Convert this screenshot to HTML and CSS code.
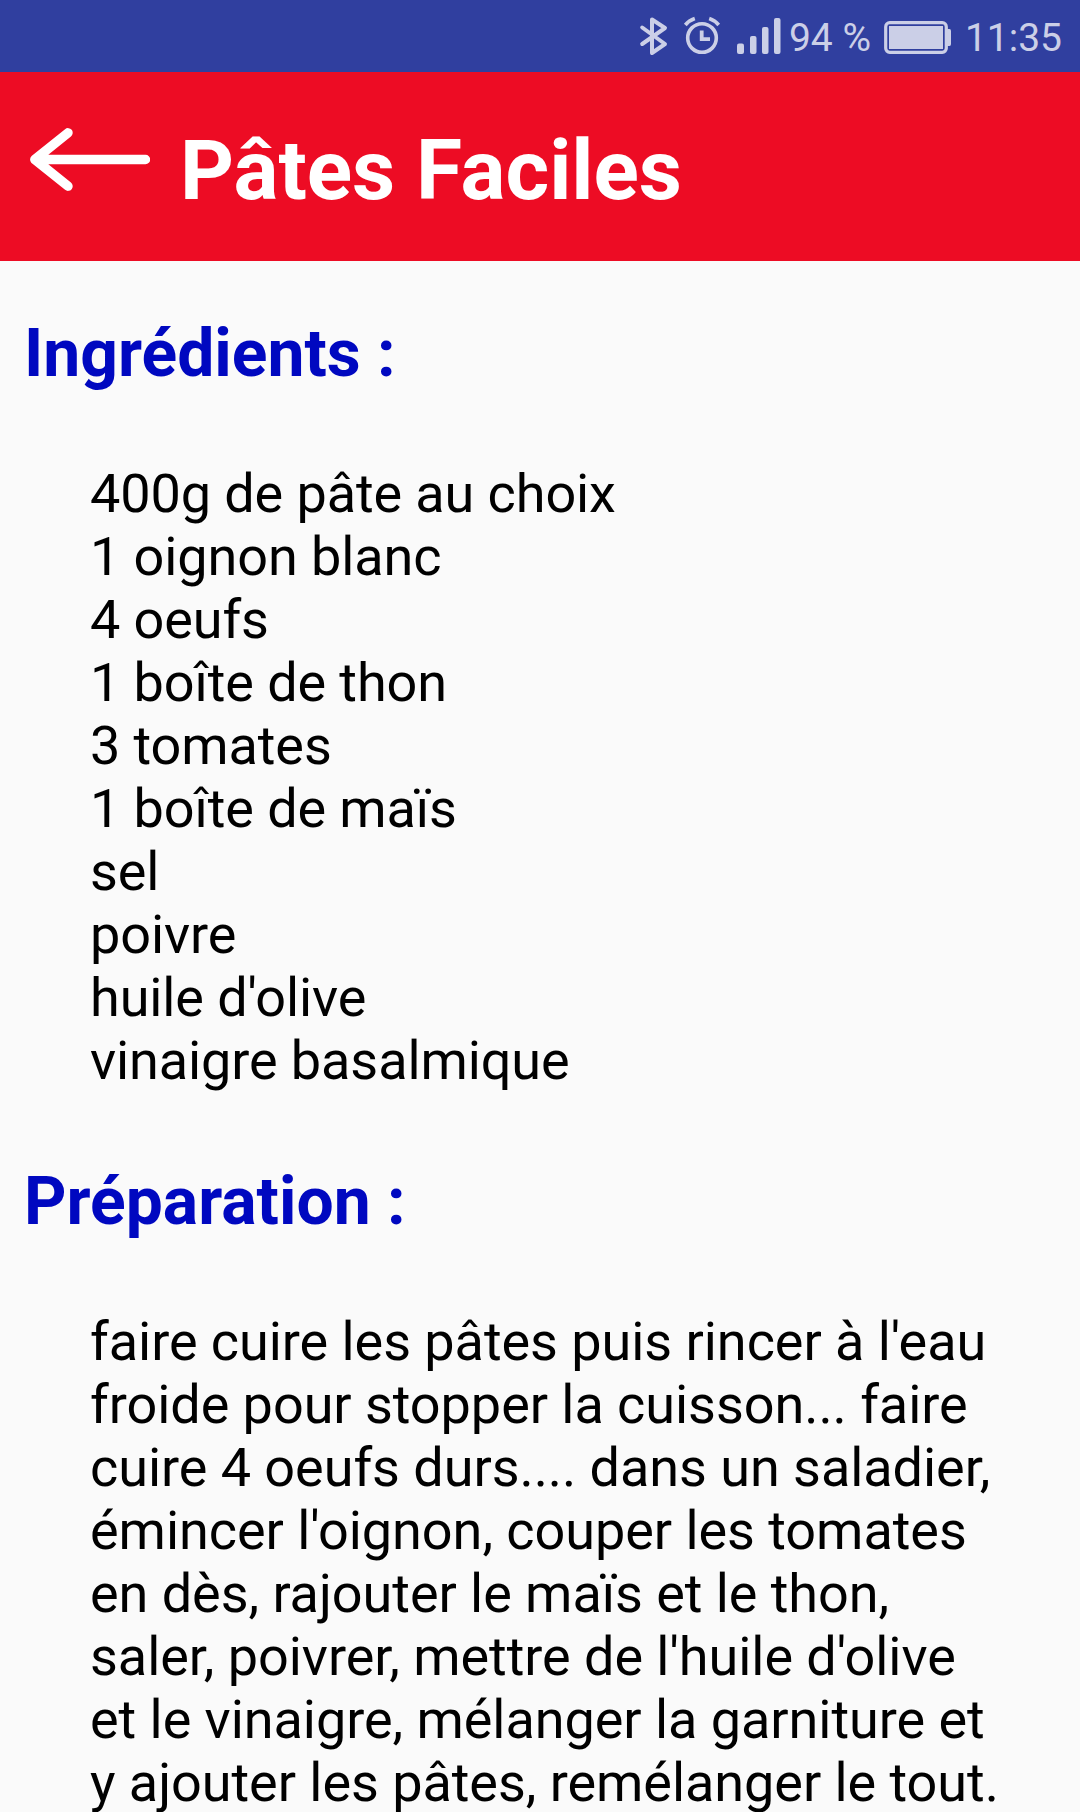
FILE: index.html
```html
<!DOCTYPE html>
<html lang="fr">
<head>
    <meta charset="UTF-8">
    <title>Pâtes Faciles</title>
    <link rel="stylesheet" href="styles.css">
</head>
<body>
    <div class="status-bar">
        <svg class="icon-bluetooth" width="30" height="40" viewBox="0 0 30 40" fill="none">
            <path d="M3.2 11.5L26 28L13 37V3.5L26 12L3.2 28" stroke="currentColor" stroke-width="4" stroke-linecap="round" stroke-linejoin="round"/>
        </svg>
        <svg class="icon-alarm" width="38" height="40" viewBox="0 0 38 40" fill="none">
            <circle cx="19" cy="22" r="14.3" stroke="currentColor" stroke-width="3.6"/>
            <path d="M18.7 14.5V23.2H27" stroke="currentColor" stroke-width="3.8"/>
            <path d="M2.3 9Q6 4.5 11.8 2.5M35.7 9Q32 4.5 26.2 2.5" stroke="currentColor" stroke-width="3.6"/>
        </svg>
        <svg class="icon-signal" width="44" height="40" viewBox="0 0 44 40" fill="currentColor">
            <rect x="0" y="27.5" width="7" height="10.5" rx="2"/>
            <rect x="13" y="20" width="6.5" height="18" rx="2"/>
            <rect x="25" y="11" width="6.5" height="27" rx="2"/>
            <rect x="37" y="2" width="6.5" height="36" rx="2"/>
        </svg>
        <span class="battery-level">94 %</span>
        <svg class="icon-battery" width="67" height="34" viewBox="0 0 67 34">
            <rect x="1.7" y="1.7" width="60.6" height="29.6" rx="4" fill="none" stroke="currentColor" stroke-width="3.2"/>
            <rect x="5" y="5" width="54" height="23" fill="currentColor"/>
            <path d="M63 8H65.5Q67 8 67 10V23Q67 25 65.5 25H63Z" fill="currentColor"/>
        </svg>
        <span class="clock">11:35</span>
    </div>

    <div class="header">
        <svg class="back" width="120" height="63" viewBox="0 0 120 63" fill="none">
            <path d="M115.5 31.5H6M38 4.8L4.8 31.5L38 58.2" stroke="currentColor" stroke-width="9.4" stroke-linecap="round" stroke-linejoin="round"/>
        </svg>
        <h1>Pâtes Faciles</h1>
    </div>

    <div class="recipe">
        <h2>Ingrédients :</h2>
        <ul class="ingredients">
            <li>400g de pâte au choix</li>
            <li>1 oignon blanc</li>
            <li>4 oeufs</li>
            <li>1 boîte de thon</li>
            <li>3 tomates</li>
            <li>1 boîte de maïs</li>
            <li>sel</li>
            <li>poivre</li>
            <li>huile d'olive</li>
            <li>vinaigre basalmique</li>
        </ul>

        <h2>Préparation :</h2>
        <p class="preparation">faire cuire les pâtes puis rincer à l'eau froide pour stopper la cuisson... faire cuire 4 oeufs durs.... dans un saladier, émincer l'oignon, couper les tomates en dès, rajouter le maïs et le thon, saler, poivrer, mettre de l'huile d'olive et le vinaigre, mélanger la garniture et y ajouter les pâtes, remélanger le tout.</p>
    </div>
</body>
</html>
```

FILE: styles.css
```css
:root {
    --status-bg: #303f9f;
    --status-text: #cbcfe7;
    --header-bg: #ed0c24;
    --background: #fafafa;
    --heading: #0008c0;
    --text: #000000;
}

* {
    margin: 0;
    padding: 0;
    box-sizing: border-box;
}

body {
    height: 1812px;
    overflow: hidden;
    font-family: Roboto, sans-serif;
    background-color: var(--background);
    color: var(--text);
}

svg {
    display: block;
    flex-shrink: 0;
}

.status-bar {
    display: flex;
    justify-content: flex-end;
    height: 72px;
    padding: 16px 18px 0 0;
    background-color: var(--status-bg);
    color: var(--status-text);
    font-size: 39px;
    line-height: 46px;
    white-space: nowrap;
}

.icon-bluetooth {
    margin-right: 14px;
}

.icon-alarm {
    margin-right: 16px;
}

.icon-signal {
    margin-right: 8px;
}

.battery-level {
    width: 95px;
}

.icon-battery {
    margin-top: 5px;
    margin-right: 14px;
}

.battery-level,
.clock {
    margin-top: -1px;
}

.header {
    display: flex;
    align-items: flex-start;
    height: 189px;
    padding: 50px 30px 0;
    background-color: var(--header-bg);
    color: #ffffff;
}

.back {
    margin-top: 6px;
    margin-right: 30px;
}

.header h1 {
    font-size: 84px;
    font-weight: 700;
    line-height: 98px;
    letter-spacing: -0.08px;
}

.recipe {
    padding: 54px 24px 0;
}

.recipe h2 {
    margin-bottom: 69px;
    font-size: 66px;
    font-weight: 700;
    line-height: 78px;
    color: var(--heading);
}

.ingredients,
.preparation {
    padding: 0 48px 0 66px;
    font-size: 54px;
    line-height: 63px;
}

.ingredients {
    margin-bottom: 71px;
    list-style: none;
    letter-spacing: -0.1px;
}

.preparation {
    letter-spacing: -0.05px;
}
```
